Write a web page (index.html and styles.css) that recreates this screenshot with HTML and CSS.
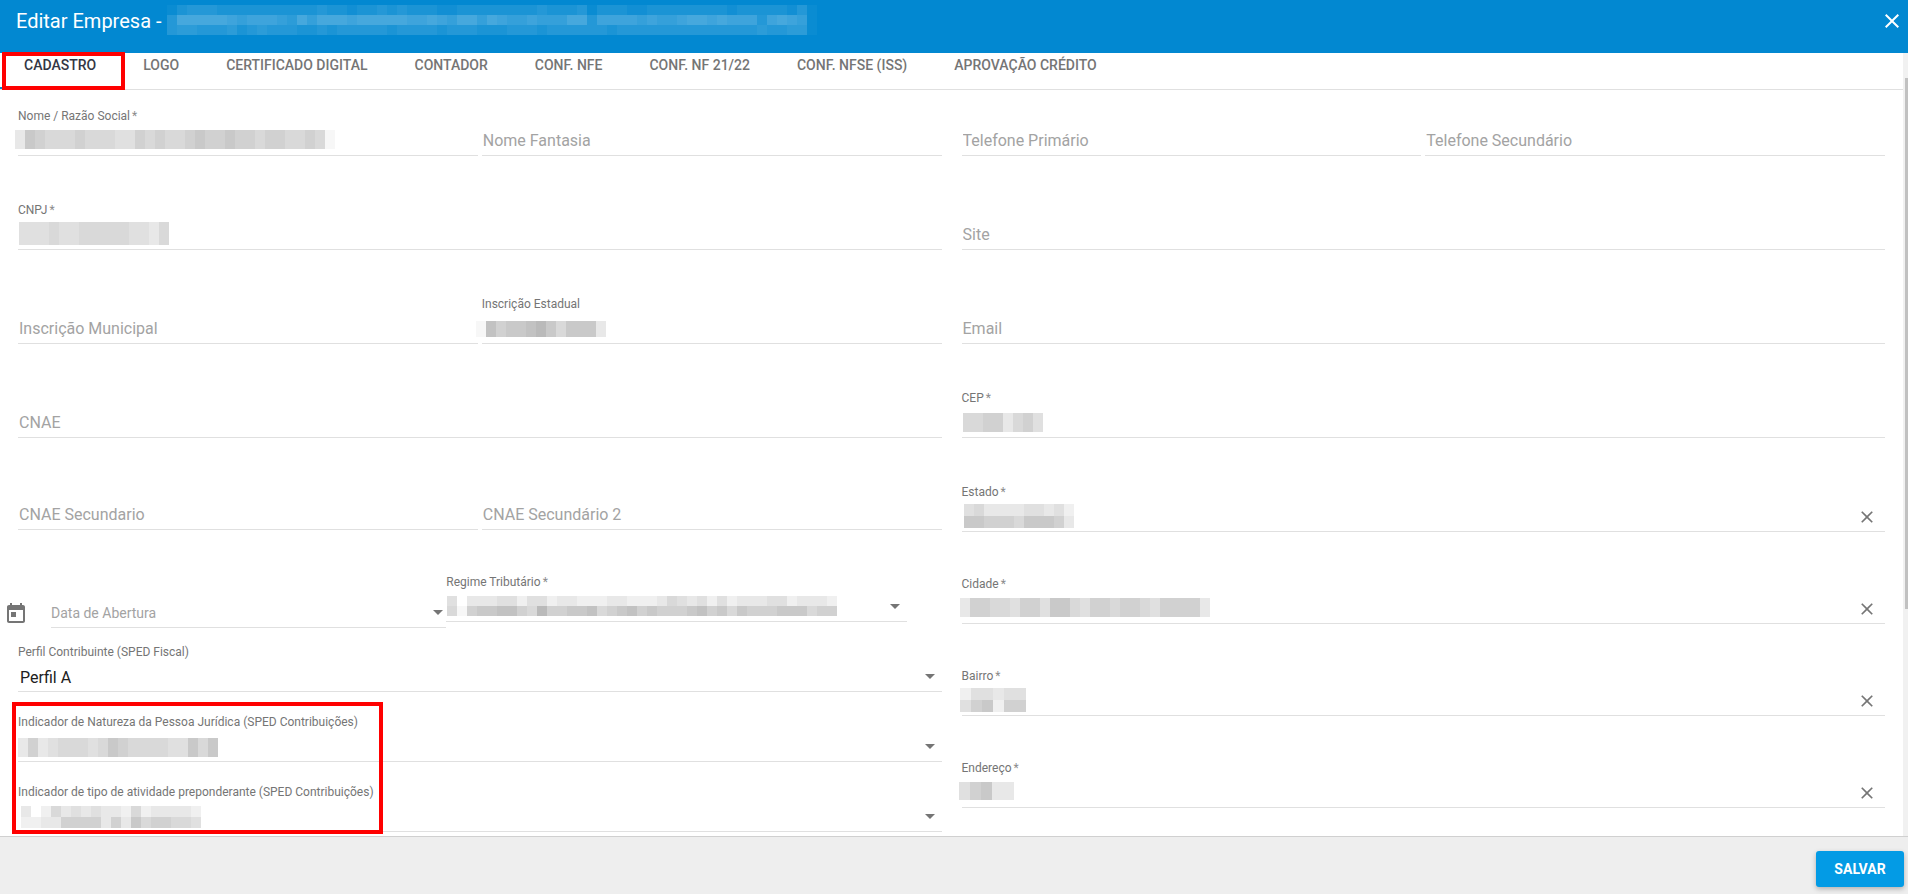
FILE: index.html
```html
<!DOCTYPE html>
<html lang="pt-BR">
<head>
<meta charset="utf-8">
<title>Editar Empresa</title>
<link rel="stylesheet" href="styles.css">
</head>
<body>
<svg class="sprite" aria-hidden="true">
  <symbol id="i-close" viewBox="0 0 24 24"><path d="M19 6.41L17.59 5 12 10.59 6.41 5 5 6.41 10.59 12 5 17.59 6.41 19 12 13.41 17.59 19 19 17.59 13.41 12z"/></symbol>
  <symbol id="i-today" viewBox="0 0 24 24"><path d="M19 3h-1V1h-2v2H8V1H6v2H5c-1.11 0-1.99.9-1.99 2L3 19c0 1.1.89 2 2 2h14c1.1 0 2-.9 2-2V5c0-1.100-.9-2-2-2zm0 16H5V8h14v11zM7 10h5v5H7z"/></symbol>
</svg>

<header class="toolbar">
  <h1 class="title">Editar Empresa -<span class="mosaic mosaic-title" data-rows="13444333333333343323343433322333333334333413332233333333233333241|48888876777658688878888877876886876676668847777676678878777478761|45544453454443343444443444434443334443444444344444444444444544551"></span></h1>
  <button class="icon-button close" type="button" aria-label="Fechar"><svg width="24" height="24"><use href="#i-close"/></svg></button>
</header>

<div class="body">
  <main class="content">
    <nav class="tabs" role="tablist">
      <button class="tab active" role="tab" type="button" aria-selected="true">Cadastro</button>
      <button class="tab" role="tab" type="button">Logo</button>
      <button class="tab" role="tab" type="button">Certificado Digital</button>
      <button class="tab" role="tab" type="button">Contador</button>
      <button class="tab" role="tab" type="button">Conf. NFe</button>
      <button class="tab" role="tab" type="button">Conf. NF 21/22</button>
      <button class="tab" role="tab" type="button">Conf. NFSe (ISS)</button>
      <button class="tab" role="tab" type="button">Aprovação Crédito</button>
    </nav>

    <form class="form" id="empresa">
      <div class="column">
        <div class="pair">
          <div class="field"><label for="nome">Nome / Razão Social<span class="req">*</span></label><input id="nome" type="text"><span class="mosaic mosaic-nome" data-rows="37655565554465655676676656655651"></span></div>
          <div class="field"><input type="text" aria-label="Nome Fantasia" placeholder="Nome Fantasia"></div>
        </div>
        <div class="field"><label for="cnpj">CNPJ<span class="req">*</span></label><input id="cnpj" type="text"><span class="mosaic mosaic-cnpj" data-rows="444544555554435"></span></div>
        <div class="pair">
          <div class="field"><input type="text" aria-label="Inscrição Municipal" placeholder="Inscrição Municipal"></div>
          <div class="field"><label for="ie">Inscrição Estadual</label><input id="ie" type="text"><span class="mosaic mosaic-ie" data-rows="1867789757773"></span></div>
        </div>
        <div class="field short"><input type="text" aria-label="CNAE" placeholder="CNAE"></div>
        <div class="pair short">
          <div class="field"><input type="text" aria-label="CNAE Secundario" placeholder="CNAE Secundario"></div>
          <div class="field"><input type="text" aria-label="CNAE Secundário 2" placeholder="CNAE Secundário 2"></div>
        </div>
        <div class="date-row">
          <svg class="calendar" width="24" height="24"><use href="#i-today"/></svg>
          <div class="field date"><input type="text" aria-label="Data de Abertura" placeholder="Data de Abertura"><span class="arrow"></span></div>
          <div class="field regime"><label for="regime">Regime Tributário<span class="req">*</span></label><select id="regime"><option></option></select><span class="arrow"></span><span class="mosaic mosaic-regime" data-rows="403334424423322233222354342423334423332|516778865966778567867666786757666777566"></span></div>
        </div>
        <div class="field tight"><label for="perfil">Perfil Contribuinte (SPED Fiscal)</label><select id="perfil"><option>Perfil A</option></select><span class="arrow"></span></div>
        <div class="field tight"><label for="natureza">Indicador de Natureza da Pessoa Jurídica (SPED Contribuições)</label><select id="natureza"><option></option></select><span class="arrow"></span><span class="mosaic mosaic-natureza" data-rows="363455545765555447570"></span></div>
        <div class="field tight"><label for="tipo">Indicador de tipo de atividade preponderante (SPED Contribuições)</label><select id="tipo"><option></option></select><span class="arrow"></span><span class="mosaic mosaic-tipo" data-rows="302534343325233332|223366663637566554"></span></div>
      </div>

      <div class="column">
        <div class="pair">
          <div class="field"><input type="tel" aria-label="Telefone Primário" placeholder="Telefone Primário"></div>
          <div class="field"><input type="tel" aria-label="Telefone Secundário" placeholder="Telefone Secundário"></div>
        </div>
        <div class="field"><input type="text" aria-label="Site" placeholder="Site"></div>
        <div class="field"><input type="email" aria-label="Email" placeholder="Email"></div>
        <div class="field"><label for="cep">CEP<span class="req">*</span></label><input id="cep" type="text"><span class="mosaic mosaic-cep" data-rows="55663564"></span></div>
        <div class="field short"><label for="estado">Estado<span class="req">*</span></label><input id="estado" type="text"><button class="icon-button clear" type="button" aria-label="Limpar estado"><svg width="20" height="20"><use href="#i-close"/></svg></button><span class="mosaic mosaic-estado" data-rows="45333344342|77666577763"></span></div>
        <div class="field short"><label for="cidade">Cidade<span class="req">*</span></label><input id="cidade" type="text"><button class="icon-button clear" type="button" aria-label="Limpar cidade"><svg width="20" height="20"><use href="#i-close"/></svg></button><span class="mosaic mosaic-cidade" data-rows="3665546647754665665466663"></span></div>
        <div class="field short"><label for="bairro">Bairro<span class="req">*</span></label><input id="bairro" type="text"><button class="icon-button clear" type="button" aria-label="Limpar bairro"><svg width="20" height="20"><use href="#i-close"/></svg></button><span class="mosaic mosaic-bairro" data-rows="244344|467266"></span></div>
        <div class="field short"><label for="endereco">Endereço<span class="req">*</span></label><input id="endereco" type="text"><button class="icon-button clear" type="button" aria-label="Limpar endereço"><svg width="20" height="20"><use href="#i-close"/></svg></button><span class="mosaic mosaic-endereco" data-rows="46733"></span></div>
      </div>
    </form>
  </main>
  <div class="scrollbar" aria-hidden="true"><div class="thumb"></div></div>
</div>

<footer class="actions">
  <button class="save" type="submit" form="empresa">Salvar</button>
</footer>

<div class="marker marker-tab"></div>
<div class="marker marker-fields"></div>
<script src="mosaic.js"></script>
</body>
</html>
```
FILE: styles.css
```css
* { box-sizing: border-box; }

body {
  margin: 0;
  height: 100vh;
  display: flex;
  flex-direction: column;
  overflow: hidden;
  position: relative;
  background: #fff;
  color: #212121;
  font-family: Roboto, "Liberation Sans", sans-serif;
  font-size: 16px;
}

button, input, select { font-family: inherit; }

.sprite { position: absolute; width: 0; height: 0; }
svg { display: block; fill: currentColor; }

.toolbar {
  flex: none;
  height: 53px;
  padding: 9px 4px 0 16px;
  display: flex;
  justify-content: space-between;
  align-items: flex-start;
  background: #0288d1;
  color: #fff;
}

.title {
  position: relative;
  margin: 0;
  font-size: 20px;
  font-weight: 400;
  line-height: 24px;
}

.icon-button {
  padding: 0;
  border: 0;
  background: none;
  color: inherit;
  cursor: pointer;
}

.body {
  flex: 1;
  min-height: 0;
  display: flex;
}

.content {
  flex: 1;
  min-width: 0;
  overflow: hidden;
}

.scrollbar {
  flex: none;
  width: 5px;
  padding: 25px 0 0 2px;
  background: #f1f1f1;
}

.thumb { height: 70%; background: #c1c1c1; }

.tabs { display: flex; border-bottom: 1px solid #e0e0e0; }

.tab {
  height: 36px;
  padding: 2px 23px 12px 24px;
  border: 0;
  border-bottom: 2px solid transparent;
  background: none;
  color: #757575;
  font-size: 14px;
  font-weight: 500;
  line-height: 20px;
  text-transform: uppercase;
}

.tab.active { color: #333645; border-bottom-color: #0288d1; }

.form {
  padding: 18px 18px 0;
  display: grid;
  grid-template-columns: 1fr 1fr;
  column-gap: 20px;
}

.column { min-width: 0; }

.pair {
  display: grid;
  grid-template-columns: 1fr 1fr;
  column-gap: 4px;
  margin-bottom: 46px;
}

.field {
  position: relative;
  height: 48px;
  margin-bottom: 46px;
  display: flex;
  flex-direction: column;
  justify-content: flex-end;
  border-bottom: 1px solid #e0e0e0;
}

.field.short, .pair.short { margin-bottom: 44px; }
.field.tight { margin-bottom: 22px; }
.pair .field, .date-row .field { margin-bottom: 0; }

.field label {
  color: #757575;
  font-size: 12px;
  line-height: 16px;
  white-space: nowrap;
}

.req { margin-left: 2px; color: #8c8c8c; }

.field input, .field select {
  width: 100%;
  height: 31px;
  margin: 0;
  padding: 2px 0 0 1px;
  border: 0;
  outline: 0;
  border-radius: 0;
  background: none;
  color: #212121;
  font-size: 16px;
}

.field select { appearance: none; padding: 4px 2px 0; }
.field input::placeholder { color: #a3a3a3; opacity: 1; }

.date-row {
  margin: 0 35px 16px -14px;
  height: 54px;
  display: grid;
  grid-template-columns: 24px 418fr 460fr;
  align-items: start;
}

.calendar { align-self: end; margin-bottom: 2px; color: #757575; }
.date { align-self: end; margin-left: 23px; }
.field.date input { padding-left: 0; font-size: 14px; }

.arrow {
  position: absolute;
  right: 7px;
  bottom: 12px;
  border: 5px solid transparent;
  border-top-color: #757575;
  border-bottom: 0;
  pointer-events: none;
}

.date .arrow { right: 3px; }

.clear {
  position: absolute;
  right: 8px;
  bottom: 4px;
  color: #757575;
}

.actions {
  flex: none;
  height: 58px;
  padding: 14px 4px 0;
  display: flex;
  align-items: flex-start;
  justify-content: flex-end;
  border-top: 1px solid #d0d0d0;
  background: #eee;
}

.save {
  min-width: 88px;
  height: 36px;
  border: 0;
  border-radius: 3px;
  background: #039be5;
  box-shadow: 0 2px 5px rgba(0, 0, 0, .26);
  color: #fff;
  font-size: 14px;
  font-weight: 700;
  text-transform: uppercase;
}

/* Pixelated covers over private values */
.mosaic {
  --cell-h: 19px;
  --cell-w: 10px;
  position: absolute;
  display: grid;
  grid-auto-rows: var(--cell-h);
  pointer-events: none;
}

.mosaic-title { --cell-h: 10px; left: 151px; top: -4px; }
.mosaic-nome { left: -3px; bottom: 6px; }
.mosaic-cnpj { --cell-h: 23px; left: 1px; bottom: 4px; }
.mosaic-ie { --cell-h: 16px; left: -6px; bottom: 6px; }
.mosaic-regime { --cell-h: 10px; left: 1px; bottom: 5px; }
.mosaic-natureza { left: 0; bottom: 4px; }
.mosaic-tipo { --cell-h: 11px; left: 3px; bottom: 3px; }
.mosaic-cep { left: 1px; bottom: 5px; }
.mosaic-estado { --cell-h: 12px; left: 2px; bottom: 3px; }
.mosaic-cidade { left: -2px; bottom: 6px; }
.mosaic-bairro { --cell-h: 12px; --cell-w: 11px; left: -2px; bottom: 3px; }
.mosaic-endereco { --cell-h: 18px; --cell-w: 11px; left: -3px; bottom: 7px; }

/* Red highlight frames drawn over the page */
.marker {
  position: absolute;
  border: 4px solid #f00;
  pointer-events: none;
}

.marker-tab { left: 2px; top: 52px; width: 123px; height: 38px; }
.marker-fields { left: 12px; top: 702px; width: 371px; height: 132px; }
```
FILE: mosaic.js
```js
// Each digit of data-rows is the strength of one cell.
document.querySelectorAll('.mosaic').forEach(function (box) {
  var rows = box.dataset.rows.split('|');
  var columns = rows[0].length;
  var step = box.classList.contains('mosaic-title') ? 0.034 : 0.03;
  var ink = box.classList.contains('mosaic-title') ? '255,255,255' : '0,0,0';
  box.style.gridTemplateColumns = 'repeat(' + columns + ', var(--cell-w))';
  rows.forEach(function (row) {
    row.padEnd(columns, '0').slice(0, columns).split('').forEach(function (digit) {
      var cell = document.createElement('i');
      cell.style.background = 'rgba(' + ink + ',' + digit * step + ')';
      box.appendChild(cell);
    });
  });
});
```
